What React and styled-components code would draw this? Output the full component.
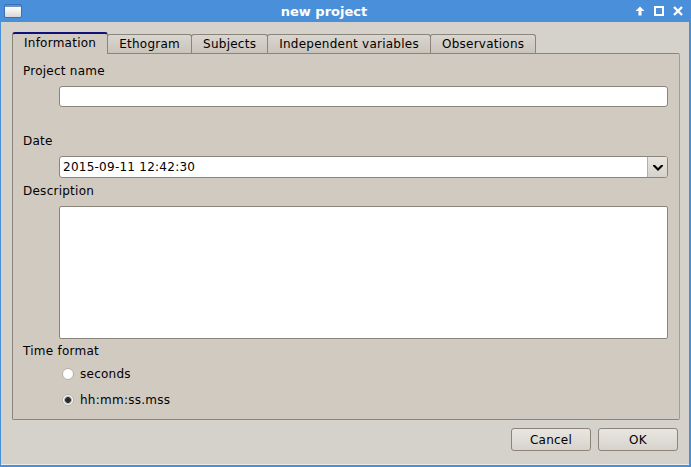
import styled, { createGlobalStyle } from 'styled-components';
import { useState } from 'react';

const GlobalStyle = createGlobalStyle`
  html, body {
    margin: 0;
    padding: 0;
    background: #d5d1cb;
  }
  body {
    font-family: "DejaVu Sans", "Liberation Sans", sans-serif;
    font-size: 12px;
    letter-spacing: 0.25px;
    color: #000;
  }
`;

const tabs = ['Information', 'Ethogram', 'Subjects', 'Independent variables', 'Observations'];

export default function App() {
  const [format, setFormat] = useState('hms');
  const [active, setActive] = useState(0);

  return (
    <>
      <GlobalStyle />
      <Window>
        <TitleBar>
          <AppIcon />
          <Title>new project</Title>
          <TitleButtons>
            <svg width="10" height="10" viewBox="0 0 10 10">
              <path d="M5 0.5 L9.5 5 L6.5 5 L6.5 9.5 L3.5 9.5 L3.5 5 L0.5 5 Z" fill="#fff" />
            </svg>
            <svg width="10" height="10" viewBox="0 0 10 10">
              <rect x="1" y="1" width="8" height="8" fill="none" stroke="#fff" strokeWidth="2" />
            </svg>
            <svg width="10" height="10" viewBox="0 0 10 10">
              <path d="M1 1 L9 9 M9 1 L1 9" stroke="#fff" strokeWidth="2.4" />
            </svg>
          </TitleButtons>
        </TitleBar>

        <Body>
          <TabBar>
            {tabs.map((t, i) => (
              <Tab key={t} $active={i === active} onClick={() => setActive(i)}>{t}</Tab>
            ))}
          </TabBar>
          <Panel>
            <Label>Project name</Label>
            <TextInput $mt={7} />

            <Label $mt={27}>Date</Label>
            <Combo>
              <ComboText>2015-09-11 12:42:30</ComboText>
              <ComboButton>
                <svg width="10" height="7" viewBox="0 0 10 7">
                  <path d="M0 1 L2 1 L5 4 L8 1 L10 1 L10 2 L5 7 L0 2 Z" fill="#000" />
                </svg>
              </ComboButton>
            </Combo>

            <Label $mt={6}>Description</Label>
            <TextArea />

            <Label $mt={5}>Time format</Label>
            <RadioRow $mt={8} onClick={() => setFormat('sec')}>
              <Radio $checked={format === 'sec'} />
              seconds
            </RadioRow>
            <RadioRow $mt={12} onClick={() => setFormat('hms')}>
              <Radio $checked={format === 'hms'} />
              hh:mm:ss.mss
            </RadioRow>
          </Panel>

          <ButtonRow>
            <Button>Cancel</Button>
            <Button>OK</Button>
          </ButtonRow>
        </Body>
      </Window>
    </>
  );
}

const Window = styled.div`
  width: 691px;
  height: 467px;
  box-sizing: border-box;
  display: flex;
  flex-direction: column;
  border-left: 1px solid #4a8fd9;
  border-right: 2px solid #4a8fd9;
  border-bottom: 2px solid #4a8fd9;
  background: #d5d1cb;
  overflow: hidden;
`;

const TitleBar = styled.div`
  height: 22px;
  flex: none;
  background: #4a8fd9;
  display: flex;
  align-items: center;
  padding: 0 6px 0 4px;
`;

const AppIcon = styled.div`
  width: 16px;
  height: 12px;
  box-sizing: border-box;
  border-radius: 1px;
  background: linear-gradient(#ffffff, #d8d8d8);
  border-top: 2px solid #6e8fc8;
  box-shadow: 0 0 0 1px #3a70b8;
`;

const Title = styled.div`
  flex: 1;
  text-align: center;
  color: #fff;
  font-weight: bold;
  font-size: 13px;
  letter-spacing: 0;
  padding-right: 8px;
`;

const TitleButtons = styled.div`
  display: flex;
  gap: 9px;
  align-items: center;
`;

const Body = styled.div`
  flex: 1;
  display: flex;
  flex-direction: column;
  padding: 9px 11px 0 11px;
  border-bottom: 1px solid #eceae6;
`;

const TabBar = styled.div`
  display: flex;
  align-items: flex-end;
  height: 22px;
  padding-left: 1px;
`;

const Tab = styled.div`
  box-sizing: border-box;
  height: ${p => (p.$active ? '22px' : '19px')};
  padding: 0 11px;
  line-height: ${p => (p.$active ? '19px' : '18px')};
  border: 1px solid #8b8478;
  border-bottom: none;
  border-top: ${p => (p.$active ? '2px solid #10107a' : '1px solid #8b8478')};
  border-radius: 3px 3px 0 0;
  margin-left: -1px;
  background: ${p => (p.$active ? '#d1cac1' : 'linear-gradient(#dad6d0, #c9c4bb)')};
  position: relative;
  z-index: ${p => (p.$active ? 2 : 1)};
  margin-bottom: ${p => (p.$active ? '-1px' : '0')};
  white-space: nowrap;
  cursor: default;
`;

const Panel = styled.div`
  width: 668px;
  height: 367px;
  box-sizing: border-box;
  border: 1px solid #8b8478;
  border-right-color: #a39c91;
  border-radius: 0 2px 2px 2px;
  background: #d1cac1;
  display: flex;
  flex-direction: column;
  padding: 10px 11px 0 10px;
`;

const Label = styled.div`
  line-height: 15px;
  margin-top: ${p => p.$mt || 0}px;
`;

const TextInput = styled.div`
  margin: ${p => p.$mt || 0}px 0 0 36px;
  height: 21px;
  box-sizing: border-box;
  border: 1px solid #8b8478;
  border-radius: 3px;
  background: #fff;
`;

const Combo = styled.div`
  margin: 7px 0 0 36px;
  height: 22px;
  box-sizing: border-box;
  border: 1px solid #8b8478;
  border-radius: 3px;
  background: #fff;
  display: flex;
  overflow: hidden;
`;

const ComboText = styled.div`
  flex: 1;
  padding-left: 3px;
  line-height: 20px;
`;

const ComboButton = styled.div`
  width: 19px;
  border-left: 1px solid #b5afa5;
  background: linear-gradient(#e8e5e0, #d6d2cb);
  display: flex;
  align-items: center;
  justify-content: center;
`;

const TextArea = styled.div`
  margin: 7px 0 0 36px;
  height: 133px;
  box-sizing: border-box;
  border: 1px solid #8b8478;
  border-radius: 2px;
  background: #fff;
`;

const RadioRow = styled.div`
  display: flex;
  align-items: center;
  gap: 6px;
  margin: ${p => p.$mt || 0}px 0 0 39px;
  line-height: 14px;
  cursor: default;
`;

const Radio = styled.span`
  width: 12px;
  height: 12px;
  box-sizing: border-box;
  border-radius: 50%;
  border: 1px solid #b9b2a8;
  background: ${p => (p.$checked
    ? 'radial-gradient(circle, #2a2a2a 0 2.5px, #8e8e8e 3px, #ffffff 4.5px)'
    : 'radial-gradient(circle at 40% 40%, #ffffff 60%, #ebe8e3)')};
`;

const ButtonRow = styled.div`
  display: flex;
  justify-content: flex-end;
  gap: 7px;
  margin-top: 8px;
`;

const Button = styled.button`
  width: 80px;
  height: 23px;
  font-family: "DejaVu Sans", "Liberation Sans", sans-serif;
  font-size: 12px;
  letter-spacing: 0.25px;
  color: #000;
  border: 1px solid #8b8478;
  border-radius: 3px;
  background: linear-gradient(#e9e6e1, #d7d3cc);
  padding: 0;
`;
